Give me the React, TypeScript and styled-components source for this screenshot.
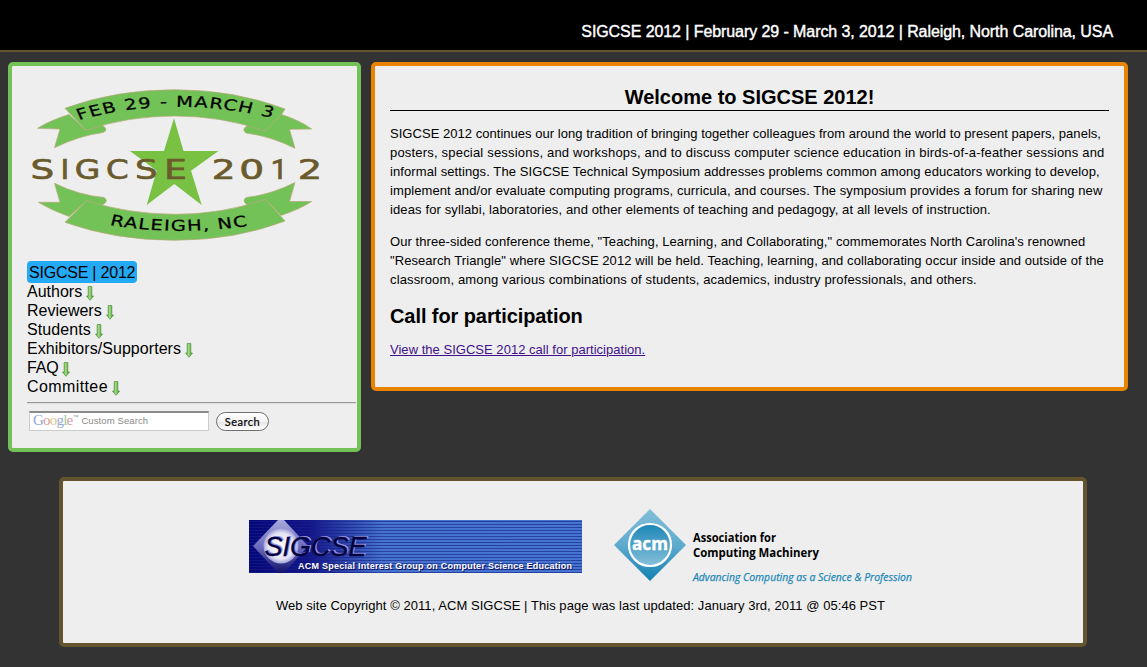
import React from "react";
import styled, { createGlobalStyle } from "styled-components";

const Global = createGlobalStyle`
  * { box-sizing: border-box; }
  body { margin: 0; background: #333; color: #000; font-family: "Liberation Sans", Arial, sans-serif; }
`;

const Page = styled.div`
  min-height: 667px;
  background: #333;
`;

const Header = styled.header`
  height: 52px;
  padding: 22px 34px 0 0;
  background: #000;
  border-bottom: 2px solid #62542c;
  color: #fff;
  font-size: 16px;
  line-height: 19px;
  letter-spacing: -0.08px;
  text-align: right;
  -webkit-text-stroke: 0.4px #fff;
`;

const Columns = styled.div`
  display: flex;
  align-items: flex-start;
  gap: 10px;
  padding: 10px 19px 0 8px;
`;

const Panel = styled.section<{ $edge: string; $h: number }>`
  height: ${(p) => p.$h}px;
  background: #eee;
  border: 4px solid ${(p) => p.$edge};
  border-radius: 5px;
`;

const Sidebar = styled(Panel)`
  flex: 0 0 353px;
  padding: 14px 0 0 15px;
`;

const Main = styled(Panel)`
  flex: 1;
  padding: 18px 15px 0;
`;

const Footer = styled(Panel)`
  width: 1028px;
  margin: 25px 0 0 59px;
  padding-top: 27px;
`;

const Logo = styled.svg`
  display: block;
  width: 300px;
  height: 170px;
`;

const Nav = styled.ul`
  list-style: none;
  margin: 11px 0 0;
  padding: 0;
  font-size: 16px;
  line-height: 19px;
`;

const NavItem = styled.li<{ $spacing: number }>`
  display: flex;
  align-items: center;
  height: 19px;
  letter-spacing: ${(p) => p.$spacing}px;
`;

const Current = styled.li`
  width: 110px;
  height: 22px;
  margin-bottom: -1px;
  padding: 2px;
  background: #24a9f5;
  border-radius: 4px;
  letter-spacing: -0.22px;
  white-space: nowrap;
`;

const Arrow = styled.svg`
  width: 8px;
  height: 15px;
  margin: 3px 0 0 4px;
`;

const Rule = styled.div`
  height: 2px;
  margin: 6px 1px 0 0;
  border-top: 1px solid #999;
  border-bottom: 1px solid #ddd;
`;

const SearchRow = styled.form`
  display: flex;
  align-items: center;
  margin: 7px 0 0 2px;
`;

const SearchField = styled.div`
  display: flex;
  align-items: center;
  width: 180px;
  height: 20px;
  padding: 0 0 2px 3px;
  background: #fff;
  border: 1px solid #ccc;
  border-top: 2px solid #8a8a8a;
  color: #888;
  font-size: 9.5px;
  letter-spacing: 0.1px;
`;

const GoogleMark = styled.span`
  margin-right: 3px;
  color: #999;
  font: 15px "Liberation Serif", serif;
  letter-spacing: -0.8px;
  display: flex;
  sup { font: 6px "Liberation Sans", sans-serif; letter-spacing: 0; margin-top: 2px; }
`;

const Tint = styled.span<{ $c: string }>`
  color: ${(p) => p.$c};
`;

const SearchButton = styled.button`
  width: 53px;
  height: 19px;
  margin-left: 7px;
  padding: 0;
  border: 1.5px solid #6f6f6f;
  border-radius: 10px;
  background: linear-gradient(#fff, #f2f2f2 50%, #e6e6e6 51%, #fff);
  color: #000;
  font: 11px Lato, sans-serif;
  letter-spacing: 0.5px;
  -webkit-text-stroke: 0.2px #000;
`;

const Title = styled.h1`
  height: 27px;
  margin: 0;
  border-bottom: 1px solid #000;
  font-size: 20px;
  line-height: 27px;
  text-align: center;
`;

const Para = styled.p`
  margin: 13px 0 0;
  font-size: 13px;
  line-height: 19px;
`;

const Line = styled.span<{ $spacing: number }>`
  display: block;
  white-space: nowrap;
  letter-spacing: ${(p) => p.$spacing}px;
`;

const Subtitle = styled.h2`
  margin: 15px 0 0;
  font-size: 20px;
  line-height: 24px;
  letter-spacing: -0.08px;
`;

const CallLink = styled.a`
  display: inline-block;
  margin-top: 12px;
  color: #40108c;
  font-size: 13px;
  line-height: 19px;
  letter-spacing: 0.025px;
  text-decoration: underline;
`;

const Sponsors = styled.div`
  display: flex;
  align-items: flex-start;
  height: 76px;
  padding-left: 186px;
`;

const Banner = styled.svg`
  width: 333px;
  height: 53px;
  margin: 12px 31px 0 0;
`;

const Acm = styled.svg`
  width: 306px;
  height: 80px;
`;

const Copyright = styled.p`
  margin: 12px 0 0 213px;
  font-size: 13px;
  line-height: 19px;
  letter-spacing: 0.052px;
  white-space: nowrap;
`;

const wordmark = [
  { ch: "S", cx: 42.2, sx: 1.38 },
  { ch: "I", cx: 65, sx: 1.1 },
  { ch: "G", cx: 87.5, sx: 1.22 },
  { ch: "C", cx: 117.3, sx: 1.2 },
  { ch: "S", cx: 146.3, sx: 1.32 },
  { ch: "E", cx: 175.5, sx: 1.32 },
  { ch: "2", cx: 223.5, sx: 1.38 },
  { ch: "0", cx: 251.7, sx: 1.45 },
  { ch: "1", cx: 279, sx: 1.1, family: "Roboto" },
  { ch: "2", cx: 310, sx: 1.42 },
];

function ConferenceLogo() {
  const ribbon = { fill: "#72c258", stroke: "#b7a878", strokeWidth: 0.7 };
  return (
    <Logo viewBox="27 80 300 170">
      <g {...ribbon}>
        <path d="M69 114.500Q51 120 37.500 128.300L60 129L54.500 147.700Q78 136 103 132.500Q107 131 105.500 128L101 124L86 130.300Z" />
        <path d="M281.500 114.500Q299 120 311.700 129L289.500 129.300L295 148.300Q270 136 246 133Q242.500 131 244.500 128L249 124.500L265 131Z" />
        <path d="M65 108.300Q115 89.700 175 89.700Q236 90 285 109L281.500 114.500L265 131Q222 116 175 116Q128 116 86 130.300Z" />
        <path d="M69 216.500Q51 210 38.300 202.300L60 202.300L54.500 183.300Q78 195 104 197.500Q108 200 105 203L101 206L86.700 200.700Z" />
        <path d="M281 215.500Q300 209 311.700 201.500L289.500 201.500L295 182.500Q270 195 246 197.500Q242.500 200 245 203L249 206L265.500 199.300Z" />
        <path d="M65 222.300Q115 240.300 175 240.300Q236 240 285 221L265.500 199.300Q222 214.300 175 214.300Q128 214 86.700 200.700Z" />
      </g>
      <path
        d="M174 118.300L183.500 151H218.500L191 170.700L201.700 205L174.300 184L146.700 205L156.700 170.700L130 151H164Z"
        fill="#78c143"
      />
      <g fill="#6a5b2d" stroke="#6a5b2d" strokeWidth="0.7" fontSize="27" textAnchor="middle">
        {wordmark.map((g) => (
          <text
            key={g.cx}
            fontFamily={g.family ?? "DejaVu Sans"}
            transform={`translate(${g.cx} 179) scale(${g.sx} 1)`}
          >
            {g.ch}
          </text>
        ))}
      </g>
      <defs>
        <path id="arcTop" d="M60.800 120Q134.600 93.500 216 120" />
        <path id="arcBottom" d="M84.200 225Q138 236.700 196 225" />
      </defs>
      <g transform="scale(1.3 1)" fontFamily="DejaVu Sans" fontSize="15" fill="#000" stroke="#000" strokeWidth="0.25">
        <text>
          <textPath href="#arcTop" textLength="151">FEB 29 - MARCH 3</textPath>
        </text>
        <text>
          <textPath href="#arcBottom" textLength="107">RALEIGH, NC</textPath>
        </text>
      </g>
    </Logo>
  );
}

function DownArrow() {
  return (
    <Arrow viewBox="0 0 8 15">
      <defs>
        <linearGradient id="arrowFill" x1="0" x2="1">
          <stop offset="0" stopColor="#4f9c35" />
          <stop offset=".45" stopColor="#a2dc86" />
          <stop offset="1" stopColor="#3d8428" />
        </linearGradient>
      </defs>
      <path d="M2.200 .5H5.800V10H7.500L4 14.300L.5 10H2.200Z" fill="url(#arrowFill)" stroke="#4b9237" strokeWidth=".7" />
    </Arrow>
  );
}

function SigcseBanner() {
  return (
    <Banner viewBox="0 0 333 53">
      <defs>
        <linearGradient id="bannerFill">
          <stop offset="0" stopColor="#06067a" />
          <stop offset=".18" stopColor="#14148a" />
          <stop offset=".4" stopColor="#4672d0" />
          <stop offset="1" stopColor="#4674d2" />
        </linearGradient>
        <linearGradient id="diamondFill" x2="0" y2="1">
          <stop offset="0" stopColor="#a9a9dc" />
          <stop offset=".5" stopColor="#6c6cc0" />
          <stop offset="1" stopColor="#11116c" />
        </linearGradient>
        <radialGradient id="moonFill">
          <stop offset="0" stopColor="#fff" />
          <stop offset=".75" stopColor="#e4e4f5" />
          <stop offset="1" stopColor="#a0a0d8" />
        </radialGradient>
        <pattern id="scan" width="4" height="3" patternUnits="userSpaceOnUse">
          <rect width="4" height="1" y="1" fill="#12237f" opacity=".6" />
        </pattern>
      </defs>
      <rect width="333" height="53" fill="url(#bannerFill)" />
      <rect width="333" height="53" fill="url(#scan)" />
      <path d="M4 26L29 0H35L59 26L35 53H29Z" fill="url(#diamondFill)" />
      <circle cx="32" cy="26" r="17.500" fill="url(#moonFill)" />
      <g fontFamily="Liberation Sans" fontStyle="italic" fontSize="27">
        <text x="17" y="35" textLength="102" lengthAdjust="spacingAndGlyphs" fill="#9a94dd">SIGCSE</text>
        <text x="15.500" y="35.500" textLength="102" lengthAdjust="spacingAndGlyphs" fill="#02023f" stroke="#02023f" strokeWidth=".3">SIGCSE</text>
      </g>
      <g fontFamily="Liberation Sans" fontSize="9" fontWeight="700">
        <text x="50" y="50" textLength="274" fill="#10105a">ACM Special Interest Group on Computer Science Education</text>
        <text x="49" y="49" textLength="274" fill="#fff">ACM Special Interest Group on Computer Science Education</text>
      </g>
    </Banner>
  );
}

function AcmLogo() {
  return (
    <Acm viewBox="613 508 306 80">
      <defs>
        <linearGradient id="acmOuter" x2="0" y2="1">
          <stop offset="0" stopColor="#82bfd9" />
          <stop offset=".5" stopColor="#5fabcd" />
          <stop offset="1" stopColor="#1280b2" />
        </linearGradient>
        <linearGradient id="acmInner" x2="0" y2="1">
          <stop offset="0" stopColor="#1c86b7" />
          <stop offset="1" stopColor="#86c0da" />
        </linearGradient>
      </defs>
      <path d="M650 509L686 545L650 581L614 545Z" fill="url(#acmOuter)" />
      <circle cx="650" cy="545" r="21" fill="url(#acmInner)" stroke="#fff" strokeWidth="2.200" />
      <text x="632" y="550" textLength="36" lengthAdjust="spacingAndGlyphs" fontFamily="Open Sans" fontWeight="700" fontSize="18" fill="#fff" stroke="#fff" strokeWidth=".4">acm</text>
      <g fontFamily="Open Sans" fontSize="12.500" fontWeight="700" fill="#000">
        <text x="693" y="542" textLength="83" lengthAdjust="spacingAndGlyphs">Association for</text>
        <text x="693" y="557" textLength="126" lengthAdjust="spacingAndGlyphs">Computing Machinery</text>
      </g>
      <text x="693" y="581" textLength="219" lengthAdjust="spacingAndGlyphs" fontFamily="Open Sans" fontStyle="italic" fontSize="11" fill="#1b87b8" stroke="#1b87b8" strokeWidth=".25">Advancing Computing as a Science &amp; Profession</text>
    </Acm>
  );
}

const navItems = [
  { label: "Authors", spacing: 0 },
  { label: "Reviewers", spacing: 0 },
  { label: "Students", spacing: 0.08 },
  { label: "Exhibitors/Supporters", spacing: 0.05 },
  { label: "FAQ", spacing: -0.2 },
  { label: "Committee", spacing: 0.4 },
];

const intro = [
  { text: "SIGCSE 2012 continues our long tradition of bringing together colleagues from around the world to present papers, panels,", spacing: 0.035 },
  { text: "posters, special sessions, and workshops, and to discuss computer science education in birds-of-a-feather sessions and", spacing: 0.195 },
  { text: "informal settings. The SIGCSE Technical Symposium addresses problems common among educators working to develop,", spacing: 0.09 },
  { text: "implement and/or evaluate computing programs, curricula, and courses. The symposium provides a forum for sharing new", spacing: 0.095 },
  { text: "ideas for syllabi, laboratories, and other elements of teaching and pedagogy, at all levels of instruction.", spacing: 0.12 },
];

const theme = [
  { text: 'Our three-sided conference theme, "Teaching, Learning, and Collaborating," commemorates North Carolina\'s renowned', spacing: 0.07 },
  { text: '"Research Triangle" where SIGCSE 2012 will be held. Teaching, learning, and collaborating occur inside and outside of the', spacing: 0.067 },
  { text: "classroom, among various combinations of students, academics, industry professionals, and others.", spacing: 0.135 },
];

export default function App() {
  return (
    <Page>
      <Global />
      <Header>SIGCSE 2012 | February 29 - March 3, 2012 | Raleigh, North Carolina, USA</Header>
      <Columns>
        <Sidebar $edge="#72c258" $h={390}>
          <ConferenceLogo />
          <Nav>
            <Current>SIGCSE | 2012</Current>
            {navItems.map((n) => (
              <NavItem key={n.label} $spacing={n.spacing}>
                {n.label}
                <DownArrow />
              </NavItem>
            ))}
          </Nav>
          <Rule />
          <SearchRow>
            <SearchField>
              <GoogleMark>
                <Tint $c="#92a8d8">G</Tint>
                <Tint $c="#d89a9a">o</Tint>
                <Tint $c="#d8cb8c">o</Tint>
                <Tint $c="#92a8d8">g</Tint>
                <Tint $c="#9ac89a">l</Tint>
                <Tint $c="#d89a9a">e</Tint>
                <sup>™</sup>
              </GoogleMark>
              Custom Search
            </SearchField>
            <SearchButton type="button">Search</SearchButton>
          </SearchRow>
        </Sidebar>
        <Main $edge="#e98300" $h={329}>
          <Title>Welcome to SIGCSE 2012!</Title>
          <Para>
            {intro.map((l) => (
              <Line key={l.text} $spacing={l.spacing}>{l.text}</Line>
            ))}
          </Para>
          <Para>
            {theme.map((l) => (
              <Line key={l.text} $spacing={l.spacing}>{l.text}</Line>
            ))}
          </Para>
          <Subtitle>Call for participation</Subtitle>
          <CallLink>View the SIGCSE 2012 call for participation.</CallLink>
        </Main>
      </Columns>
      <Footer $edge="#62542c" $h={170}>
        <Sponsors>
          <SigcseBanner />
          <AcmLogo />
        </Sponsors>
        <Copyright>Web site Copyright © 2011, ACM SIGCSE | This page was last updated: January 3rd, 2011 @ 05:46 PST</Copyright>
      </Footer>
    </Page>
  );
}
